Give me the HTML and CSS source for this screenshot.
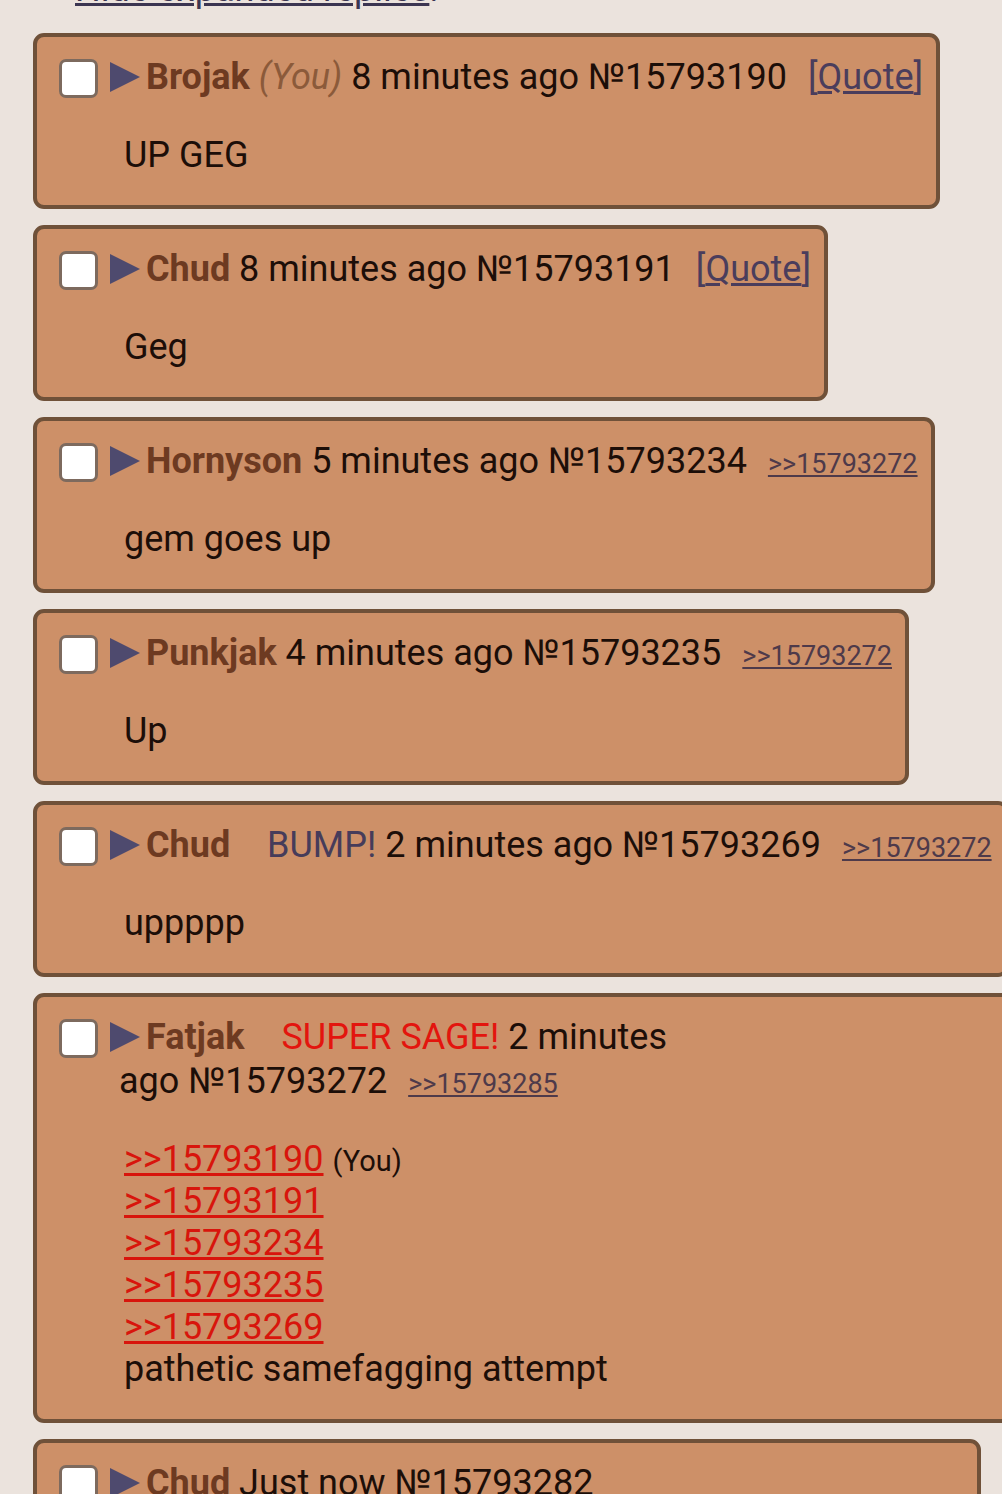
FILE: index.html
```html
<!DOCTYPE html>
<html lang="en">
<head>
    <meta charset="UTF-8">
    <meta name="viewport" content="width=device-width, initial-scale=1.0">
    <title>Thread replies</title>
    <link rel="stylesheet" href="styles.css">
</head>
<body>

    <div class="thread">
        <!-- Expanded replies toggle (mostly scrolled off the top) -->
        <div class="hide-line"><a href="#">Hide expanded replies</a>.</div>

        <article class="post">
            <div class="post-head">
                <span class="check"></span><svg class="arrow" viewBox="0 0 30 30"><polygon points="0,0 30,15 0,30"/></svg><span class="name">Brojak</span> <span class="you">(You)</span> <span class="time">8 minutes ago</span> <span class="num">№15793190</span><span class="quote">[<a href="#">Quote</a>]</span>
            </div>
            <div class="post-body">UP GEG</div>
        </article>

        <article class="post">
            <div class="post-head">
                <span class="check"></span><svg class="arrow" viewBox="0 0 30 30"><polygon points="0,0 30,15 0,30"/></svg><span class="name">Chud</span> <span class="time">8 minutes ago</span> <span class="num">№15793191</span><span class="quote">[<a href="#">Quote</a>]</span>
            </div>
            <div class="post-body">Geg</div>
        </article>

        <article class="post">
            <div class="post-head">
                <span class="check"></span><svg class="arrow" viewBox="0 0 30 30"><polygon points="0,0 30,15 0,30"/></svg><span class="name">Hornyson</span> <span class="time">5 minutes ago</span> <span class="num">№15793234</span><a class="backlink" href="#">&gt;&gt;15793272</a>
            </div>
            <div class="post-body">gem goes up</div>
        </article>

        <article class="post">
            <div class="post-head">
                <span class="check"></span><svg class="arrow" viewBox="0 0 30 30"><polygon points="0,0 30,15 0,30"/></svg><span class="name">Punkjak</span> <span class="time">4 minutes ago</span> <span class="num">№15793235</span><a class="backlink" href="#">&gt;&gt;15793272</a>
            </div>
            <div class="post-body">Up</div>
        </article>

        <article class="post">
            <div class="post-head">
                <span class="check"></span><svg class="arrow" viewBox="0 0 30 30"><polygon points="0,0 30,15 0,30"/></svg><span class="name">Chud</span> <span class="capcode bump">BUMP!</span> <span class="time">2 minutes ago</span> <span class="num">№15793269</span><a class="backlink" href="#">&gt;&gt;15793272</a>
            </div>
            <div class="post-body">uppppp</div>
        </article>

        <article class="post post-sage">
            <div class="post-head">
                <span class="check"></span><svg class="arrow" viewBox="0 0 30 30"><polygon points="0,0 30,15 0,30"/></svg><span class="name">Fatjak</span> <span class="capcode sage">SUPER SAGE!</span> <span class="time">2 minutes ago</span> <span class="num">№15793272</span><a class="backlink" href="#">&gt;&gt;15793285</a>
            </div>
            <div class="post-body">
                <a class="quotelink" href="#">&gt;&gt;15793190</a> <span class="you-small">(You)</span><br>
                <a class="quotelink" href="#">&gt;&gt;15793191</a><br>
                <a class="quotelink" href="#">&gt;&gt;15793234</a><br>
                <a class="quotelink" href="#">&gt;&gt;15793235</a><br>
                <a class="quotelink" href="#">&gt;&gt;15793269</a><br>
                pathetic samefagging attempt
            </div>
        </article>

        <article class="post post-last">
            <div class="post-head">
                <span class="check"></span><svg class="arrow" viewBox="0 0 30 30"><polygon points="0,0 30,15 0,30"/></svg><span class="name">Chud</span> <span class="time">Just now</span> <span class="num">№15793282</span>
            </div>
            <div class="post-body">&nbsp;</div>
        </article>
    </div>

</body>
</html>
```

FILE: styles.css
```css
/* Base */
html, body {
    margin: 0;
    padding: 0;
    background-color: #ebe3dd;
    color: #1c0e08;
    font-family: Roboto, "Noto Sans", sans-serif;
    font-size: 36px;
}

body {
    overflow-x: hidden;
}

a {
    color: inherit;
}

/* Thread column */
.thread {
    display: flex;
    flex-direction: column;
    align-items: flex-start;
    gap: 16px;
    padding-left: 33px;
    margin-top: -33px;
}

.hide-line {
    line-height: 44px;
    margin-left: 42px;
    margin-bottom: 6px;
    color: #3b3551;
}

/* Post card */
.post {
    box-sizing: border-box;
    background-color: #cd9068;
    border: 4px solid #6f5139;
    border-radius: 11px;
    padding: 18px 13px 29px 82px;
    white-space: nowrap;
}

.post-sage {
    width: 1045px;
    white-space: normal;
}

.post-sage .post-head {
    max-width: 600px;
}

.post-last {
    width: 948px;
}

.post-head {
    line-height: 44px;
}

.check {
    display: inline-block;
    box-sizing: border-box;
    width: 39px;
    height: 39px;
    margin-left: -60px;
    vertical-align: -9px;
    background-color: #fff;
    border: 3px solid #7d6a5e;
    border-radius: 7px;
}

.arrow {
    width: 30px;
    height: 30px;
    margin-left: 12px;
    margin-right: 6px;
    vertical-align: -3px;
    fill: #4e4a6e;
}

.name {
    font-weight: bold;
    color: #6d3a21;
}

.you {
    font-style: italic;
    color: #8b5a3a;
}

.capcode {
    margin-left: 28px;
}

.bump {
    color: #463c5a;
}

.sage {
    color: #e3150e;
}

.quote {
    margin-left: 21px;
    color: #4a3d5c;
}

.backlink {
    margin-left: 21px;
    font-size: 27px;
    line-height: 1;
    color: #4e3a4a;
}

/* Post body */
.post-body {
    margin-top: 35px;
    margin-left: 5px;
    line-height: 42px;
}

.quotelink {
    color: #d8150c;
}

.you-small {
    font-size: 29px;
    line-height: 1;
}
```
